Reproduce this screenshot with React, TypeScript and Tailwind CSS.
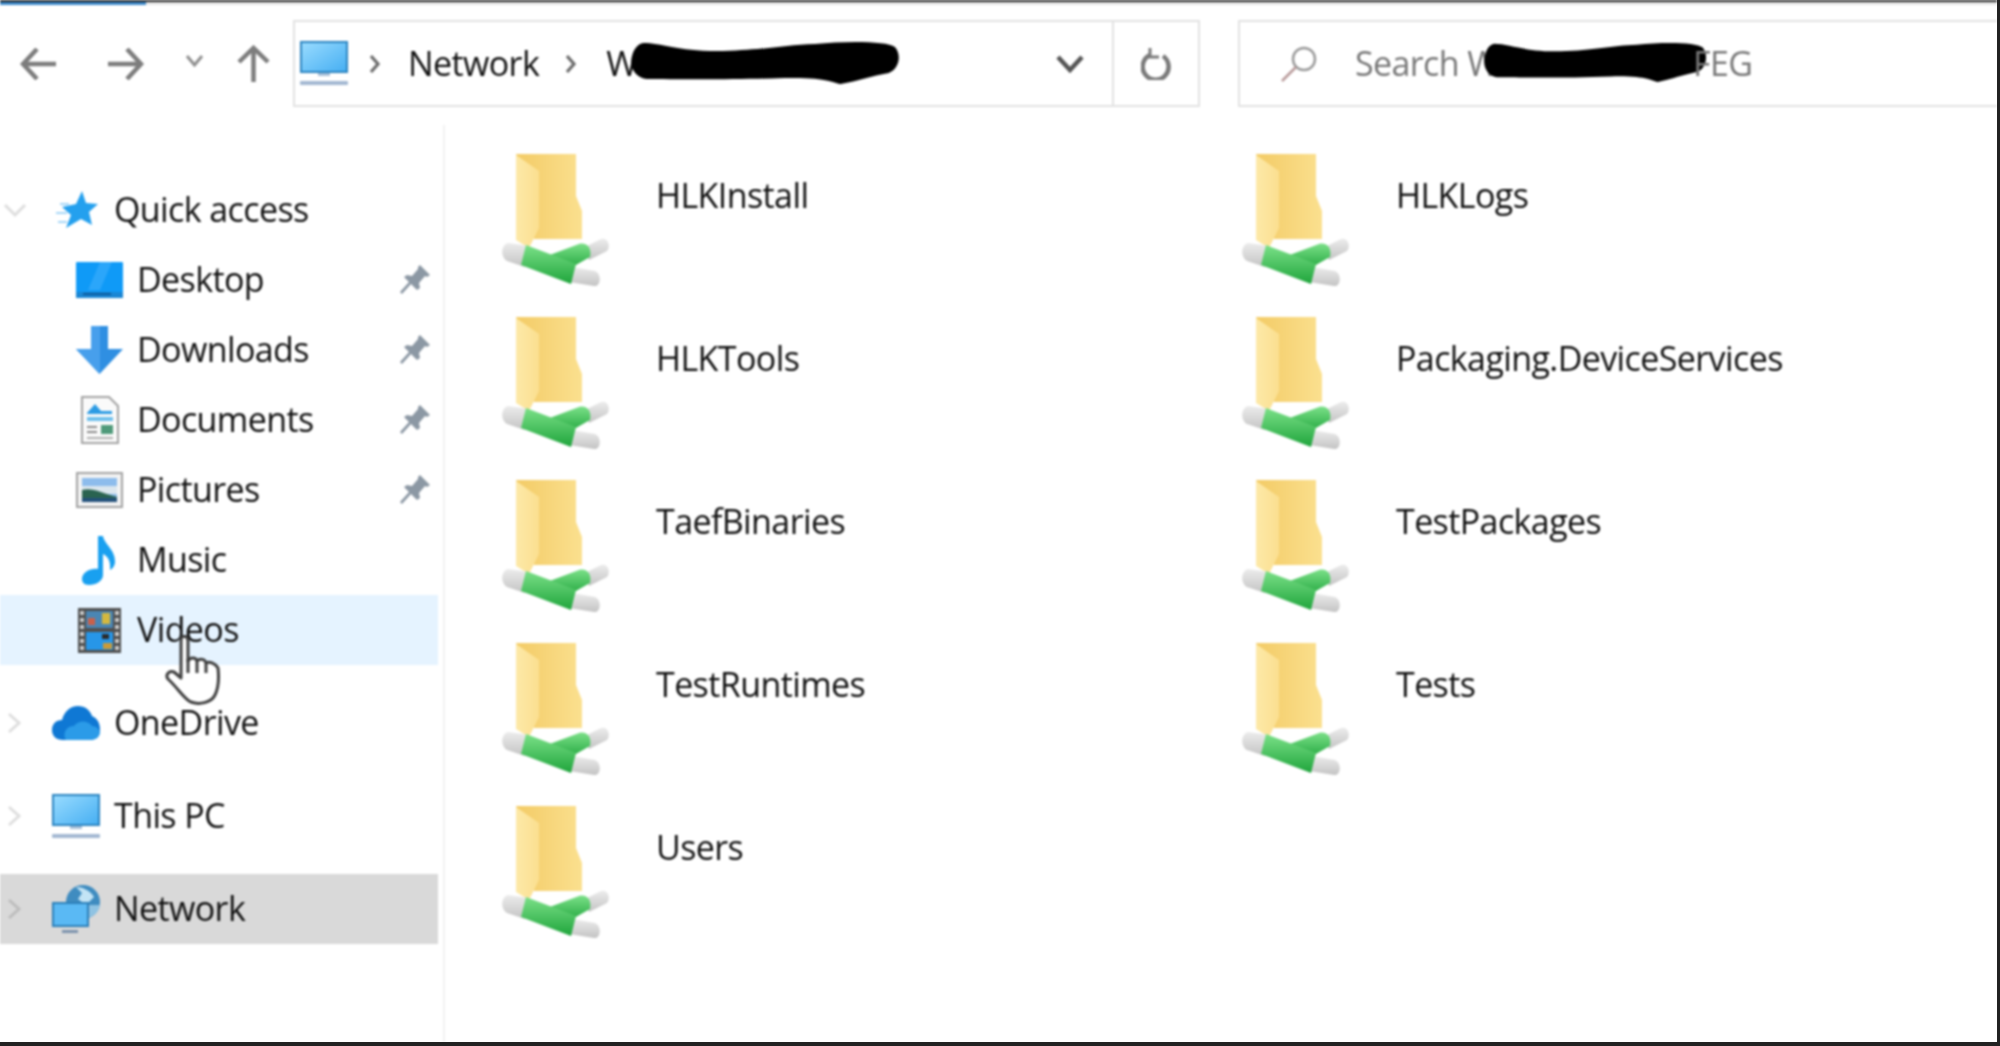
import React from "react";

const font = "font-['Open_Sans','Liberation_Sans',sans-serif]";

function FolderShare() {
  return (
    <svg width="177" height="160" viewBox="0 0 177 160" className="shrink-0">
      <defs>
        <linearGradient id="fb" x1="0" x2="1" y1="0" y2="0">
          <stop offset="0" stopColor="#f3cb66" />
          <stop offset="1" stopColor="#fbe08f" />
        </linearGradient>
        <linearGradient id="ff" x1="0" x2="1" y1="0" y2="0">
          <stop offset="0" stopColor="#fde9a8" />
          <stop offset="1" stopColor="#fbdf90" />
        </linearGradient>
        <linearGradient id="pg" x1="0" x2="0" y1="0" y2="1">
          <stop offset="0" stopColor="#7be088" />
          <stop offset="1" stopColor="#1fa53c" />
        </linearGradient>
        <linearGradient id="pw" x1="0" x2="0" y1="0" y2="1">
          <stop offset="0" stopColor="#ececec" />
          <stop offset="1" stopColor="#c4c4c4" />
        </linearGradient>
      </defs>
      <path d="M37 14H97V56L103 71V99H55V70L37 14Z" fill="url(#fb)" />
      <path d="M37 15L60 31V88L50 108L37 100Z" fill="url(#ff)" />
      <path d="M29 103L50 106L46 127L28 121C21 117 22 105 29 103Z" fill="url(#pw)" />
      <path d="M106 107L122 99C129 97 132 106 128 111L110 120Z" fill="url(#pw)" />
      <path d="M93 127L116 131C123 134 122 147 115 146L90 142Z" fill="url(#pw)" />
      <path d="M68 116L100 104C108 102 113 108 111 117L88 130Z" fill="url(#pg)" />
      <path d="M47 105L97 124L92 144L42 125Z" fill="url(#pg)" />
    </svg>
  );
}

function Monitor({ w = 48 }: { w?: number }) {
  return (
    <svg width={w} height="45" viewBox="0 0 48 45">
      <defs>
        <linearGradient id="ms" x1="0" x2="1" y1="0" y2="1">
          <stop offset="0" stopColor="#9adcff" />
          <stop offset="1" stopColor="#45aef2" />
        </linearGradient>
      </defs>
      <rect x="1" y="1" width="46" height="30" fill="url(#ms)" stroke="#2c84c0" strokeWidth="2" />
      <rect x="18" y="32" width="12" height="3" fill="#a8c0d8" />
      <rect x="0" y="40" width="48" height="4" rx="1" fill="#a3b8d2" />
    </svg>
  );
}

function Star() {
  return (
    <svg width="44" height="38" viewBox="0 0 44 38" className="ml-[3px]">
      <path d="M27 0L31 12L43 13L34 21L37 34L26 28L11 37L16 24L7 16L21 13Z" fill="#24a0ee" />
      <path d="M5 13H14M1 22H12M3 31H12" stroke="#a5d6f7" strokeWidth="2" />
    </svg>
  );
}

function Desktop() {
  return (
    <svg width="47" height="36" viewBox="0 0 47 36">
      <rect width="47" height="36" rx="1" fill="#0f9af7" />
      <path d="M24 0H36L24 28H12Z" fill="#2ba6fa" />
      <rect y="30" width="47" height="6" fill="#1a86d4" />
      <rect x="7" y="31" width="28" height="2" fill="#0a5a9c" />
    </svg>
  );
}

function Downloads() {
  return (
    <svg width="47" height="48" viewBox="0 0 47 48">
      <path d="M15 0H32V23H47L23.5 48L0 23H15Z" fill="#2f8fe2" />
      <path d="M15 0H24V48L0 23H15Z" fill="#479fec" />
    </svg>
  );
}

function Documents() {
  return (
    <svg width="38" height="48" viewBox="0 0 38 48">
      <path d="M1 1H28L37 10V47H1Z" fill="#fafafa" stroke="#a3a3a3" strokeWidth="2" />
      <path d="M6 17L14 8L20 15H31V18H6Z" fill="#2c9be4" />
      <rect x="6" y="21" width="26" height="4" fill="#6fc0ec" />
      <rect x="6" y="30" width="10" height="2" fill="#8a8a8a" />
      <rect x="6" y="35" width="10" height="2" fill="#8a8a8a" />
      <rect x="20" y="29" width="12" height="9" fill="#4f9a7a" />
      <rect x="6" y="41" width="26" height="2" fill="#b0b0b0" />
    </svg>
  );
}

function Pictures() {
  return (
    <svg width="47" height="36" viewBox="0 0 47 36">
      <rect x="1" y="1" width="45" height="34" fill="#f3f3f3" stroke="#a3a3a3" strokeWidth="2" />
      <rect x="6" y="6" width="35" height="24" fill="#8dbcec" />
      <rect x="6" y="14" width="35" height="8" fill="#dbe6ee" />
      <path d="M6 18C16 15 26 21 41 25V30H6Z" fill="#2a6350" />
      <path d="M6 26H41V30H6Z" fill="#23507a" />
    </svg>
  );
}

function Music() {
  return (
    <svg width="34" height="49" viewBox="0 0 34 49">
      <path d="M16 0H21C22 8 34 14 33 27C32 31 30 33 28 34C29 24 25 20 21 18V39C21 45 14 49 7 49C2 49 0 46 0 43C0 36 9 32 16 33Z" fill="#19a0f0" />
    </svg>
  );
}

function Videos() {
  return (
    <svg width="43" height="45" viewBox="0 0 43 45">
      <rect width="43" height="45" fill="#4f4f4f" />
      {[3, 10, 17, 24, 31, 38].map((y) => (
        <g key={y}>
          <rect x="2" y={y} width="4" height="4" fill="#c8c8c8" />
          <rect x="37" y={y} width="4" height="4" fill="#c8c8c8" />
        </g>
      ))}
      <rect x="8" y="3" width="27" height="17" fill="#4a86b4" />
      <rect x="10" y="10" width="7" height="7" fill="#c9604a" />
      <rect x="24" y="5" width="8" height="11" fill="#d4b83f" />
      <rect x="8" y="24" width="27" height="18" fill="#2796e8" />
      <rect x="24" y="26" width="7" height="5" fill="#2b2b2b" />
      <rect x="25" y="35" width="9" height="6" fill="#c99a3a" />
    </svg>
  );
}

function Cloud() {
  return (
    <svg width="48" height="34" viewBox="0 0 48 34">
      <path d="M11 34C4 34 0 30 0 24C0 18 4 14 10 14C12 6 18 0 26 0C33 0 38 4 40 10C45 12 48 17 48 23C48 30 44 34 38 34Z" fill="#0f78d4" />
      <path d="M14 34C10 28 14 20 22 20C26 14 36 14 40 20C45 20 48 24 48 27C47 32 43 34 38 34Z" fill="#2b9be8" />
    </svg>
  );
}

function NetworkIcon() {
  return (
    <svg width="48" height="48" viewBox="0 0 48 48">
      <circle cx="31" cy="17" r="17" fill="#3f8cc0" />
      <path d="M24 2C30 2 38 5 42 12L34 20L26 14L30 8Z" fill="#c3e4f5" />
      <path d="M36 20H48C47 27 42 31 36 33Z" fill="#8fc3e3" />
      <rect x="1" y="18" width="35" height="23" fill="#5ab9f4" stroke="#2c7fb8" strokeWidth="2" />
      <rect x="10" y="45" width="16" height="3" fill="#7d93ad" />
    </svg>
  );
}

function Pin() {
  return (
    <svg width="30" height="30" viewBox="0 0 30 30">
      <path d="M20 0L30 10L27 12L25 11L19 18L20 23L17 25L11 19L2 29L0 27L9 17L4 12L7 10L12 11L18 4L18 2Z" fill="#8c98a4" />
    </svg>
  );
}

function Chevron({ open }: { open?: boolean }) {
  return (
    <svg width="24" height="24" viewBox="0 0 24 24" fill="none" stroke="#000" strokeOpacity="0.13" strokeWidth="3">
      {open ? <path d="M2 7L12 17L22 7" /> : <path d="M6 3L16 12L6 21" />}
    </svg>
  );
}

function Blob({ w, h }: { w: number; h: number }) {
  return (
    <svg width={w} height={h} viewBox="0 0 263 43" preserveAspectRatio="none" className="shrink-0">
      <path d="M12 2C30 2 48 11 90 10C130 9 150 4 180 3C210 0 250 0 258 6C265 14 262 28 252 32C235 35 222 40 205 43C198 42 192 36 150 37C90 39 40 38 15 38C3 36 -2 25 1 15C3 7 7 3 12 2Z" fill="#000" />
    </svg>
  );
}

function Sep() {
  return (
    <svg width="14" height="20" viewBox="0 0 14 20" fill="none" stroke="#6b6b6b" strokeWidth="3.2" className="shrink-0">
      <path d="M3 2L10 10L3 18" />
    </svg>
  );
}

const sub = [
  { name: "Desktop", icon: <Desktop />, pin: true },
  { name: "Downloads", icon: <Downloads />, pin: true },
  { name: "Documents", icon: <div className="pl-[5px]"><Documents /></div>, pin: true },
  { name: "Pictures", icon: <Pictures />, pin: true },
  { name: "Music", icon: <div className="pl-[6px]"><Music /></div>, pin: false },
];

const top = [
  { name: "OneDrive", icon: <Cloud />, cls: "" },
  { name: "This PC", icon: <Monitor />, cls: "" },
  { name: "Network", icon: <NetworkIcon />, cls: "bg-[#d9d9d9]" },
];

const files = [
  "HLKInstall",
  "HLKLogs",
  "HLKTools",
  "Packaging.DeviceServices",
  "TaefBinaries",
  "TestPackages",
  "TestRuntimes",
  "Tests",
  "Users",
];

export default function App() {
  return (
    <div className={`${font} h-[1046px] w-[2000px] overflow-hidden border-r-[3px] border-b-[4px] border-[#222] bg-white text-[34px] tracking-[-0.6px] text-[#111]`}>
      <div className="relative flex h-full flex-col bg-white blur-[0.9px]">
        <div className="h-[2px] bg-[#222]" />
        <div className="h-[3px] bg-[#e6e6e6]">
          <div className="h-full w-[146px] bg-[#3b87c8]" />
        </div>

        <div className="flex h-[120px] shrink-0 items-start pt-[15px]">
          <div className="flex h-[87px] items-center">
            <svg width="36" height="32" viewBox="0 0 36 32" fill="none" stroke="#7d7d7d" strokeWidth="4.5" className="ml-[20px]">
              <path d="M36 16H3M17 1L3 16L17 31" />
            </svg>
            <svg width="36" height="32" viewBox="0 0 36 32" fill="none" stroke="#7d7d7d" strokeWidth="4.5" className="ml-[52px]">
              <path d="M0 16H33M19 1L33 16L19 31" />
            </svg>
            <svg width="19" height="13" viewBox="0 0 19 13" fill="none" stroke="#8f8f8f" strokeWidth="3" className="ml-[41px] mb-[6px]">
              <path d="M2 2L9.5 11L17 2" />
            </svg>
            <svg width="33" height="37" viewBox="0 0 33 37" fill="none" stroke="#7d7d7d" strokeWidth="4.5" className="ml-[33px]">
              <path d="M16.5 37V3M2 17L16.5 3L31 17" />
            </svg>
          </div>

          <div className="ml-[23px] flex h-[87px] w-[907px] items-center border-2 border-[#e2e2e2] pl-[5px]">
            <Monitor w={48} />
            <div className="ml-[20px]"><Sep /></div>
            <span className="ml-[26px]">Network</span>
            <div className="ml-[25px]"><Sep /></div>
            <span className="ml-[28px]">W</span>
            <div className="-ml-[6px] mb-[2px]"><Blob w={269} h={43} /></div>
            <svg width="28" height="18" viewBox="0 0 28 18" fill="none" stroke="#555" strokeWidth="4.5" className="ml-auto mr-[28px]">
              <path d="M2 2L14 15L26 2" />
            </svg>
            <div className="flex h-full w-[86px] items-center justify-center border-l-2 border-[#e2e2e2]">
              <svg width="30" height="32" viewBox="0 0 30 32" fill="none" stroke="#7a7a7a" strokeWidth="4.5">
                <path d="M9 7A13 13 0 1 0 22 8" />
                <path d="M9 0V9H18" strokeWidth="3" />
              </svg>
            </div>
          </div>

          <div className="ml-[38px] flex h-[87px] flex-1 items-center border-y-2 border-l-2 border-[#e2e2e2] pl-[40px] text-[#777]">
            <svg width="37" height="36" viewBox="0 0 37 36" fill="none" stroke="#9a9a9a" strokeWidth="2.5">
              <circle cx="24" cy="13" r="11" />
              <path d="M16 21L2 35" stroke="#b89a9a" />
            </svg>
            <span className="ml-[38px]">Search W</span>
            <div className="-ml-[14px] mb-[4px]"><Blob w={223} h={40} /></div>
            <span className="-ml-[14px]">FEG</span>
          </div>
        </div>

        <div className="flex min-h-0 flex-1">
          <nav className="relative w-[445px] shrink-0 border-r-2 border-[#f2f2f2] pt-[50px]">
            <div className="flex h-[70px] w-[438px] items-center pl-[3px]">
              <div className="w-[49px] shrink-0"><Chevron open /></div>
              <div className="w-[62px] shrink-0"><Star /></div>
              <span className="mb-[2px]">Quick access</span>
            </div>
            {sub.map((s) => (
              <div key={s.name} className="flex h-[70px] w-[438px] items-center pl-[76px] pr-[8px]">
                <div className="w-[61px] shrink-0">{s.icon}</div>
                <span className="mb-[2px]">{s.name}</span>
                {s.pin && <div className="ml-auto"><Pin /></div>}
              </div>
            ))}
            <div className="flex h-[70px] w-[438px] items-center bg-[#e5f3ff] pl-[78px]">
              <div className="w-[59px] shrink-0"><Videos /></div>
              <span className="mb-[2px]">Videos</span>
            </div>
            {top.map((t) => (
              <div key={t.name} className={`mt-[23px] flex h-[70px] w-[438px] items-center pl-[3px] ${t.cls}`}>
                <div className="w-[49px] shrink-0"><Chevron /></div>
                <div className="w-[62px] shrink-0">{t.icon}</div>
                <span className="mb-[2px]">{t.name}</span>
              </div>
            ))}
            <svg width="56" height="70" viewBox="0 0 56 70" className="absolute left-[165px] top-[510px]" fill="#fff" stroke="#3f3f3f" strokeWidth="3" strokeLinejoin="round">
              <path d="M17 2C20 0 23 2 23 6V26C25 22 31 22 32 26C35 23 40 24 41 28C44 26 50 28 53 33C54 42 54 52 50 60C46 68 34 70 26 67C20 65 12 52 3 44C0 40 4 35 9 37L16 43V6C16 4 16 3 17 2Z" />
              <path d="M23 24V38M32 26V38M41 28V38" fill="none" />
            </svg>
          </nav>

          <main className="grid flex-1 grid-cols-[740px_1fr] content-start pl-[34px] pt-[15px]">
            {files.map((f) => (
              <div key={f} className="flex h-[163px] items-start">
                <FolderShare />
                <span className="pt-[30px]">{f}</span>
              </div>
            ))}
          </main>
        </div>
      </div>
    </div>
  );
}
